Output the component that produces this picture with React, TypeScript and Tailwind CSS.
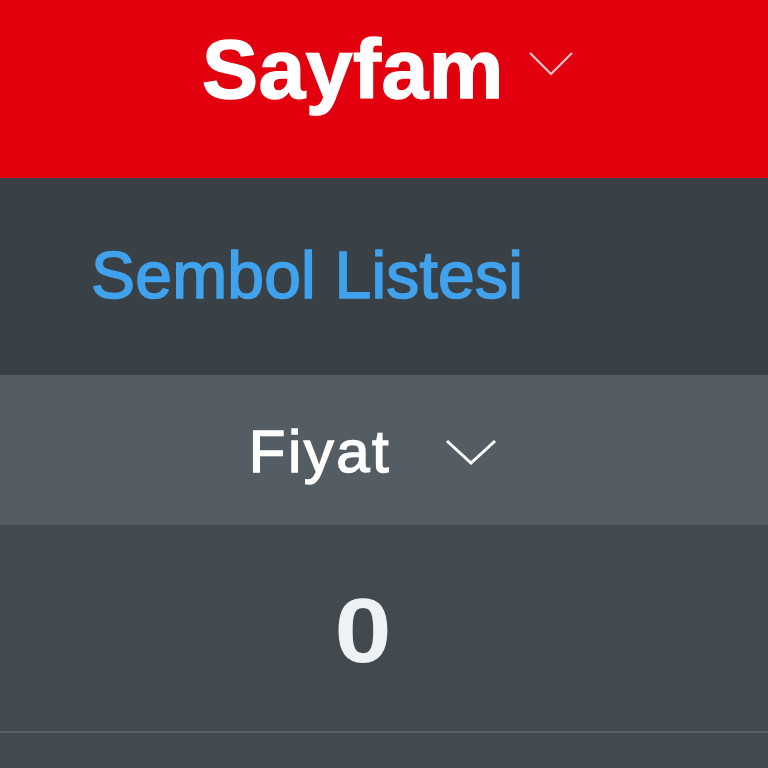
export default function App() {
    return (
        <div className="w-[768px] h-[768px] overflow-hidden bg-[#424a50] font-['Liberation_Sans',Arial,sans-serif]">
            {/* Başlık */}
            <header className="h-[178px] bg-[#e2000f] flex items-center justify-center gap-[24px] pl-[16px]">
                <span className="text-[84px] font-bold text-white leading-none -mt-[40px] tracking-[0.5px] -translate-x-[4px] [-webkit-text-stroke:1.5px_white]">Sayfam</span>
                <svg width="46" height="26" viewBox="0 0 46 26" className="-mt-[50px] -translate-x-[4px]" fill="none">
                    <path d="M2 2 L23 23 L44 2" stroke="#f6c7c9" strokeWidth="2.2" />
                </svg>
            </header>

            <div className="h-[197px] bg-[#394147] flex items-center pl-[91px]">
                <span className="text-[66px] text-[#40a2ec] leading-none tracking-[0.2px] -mt-[4px] [-webkit-text-stroke:1.6px_#40a2ec]">Sembol Listesi</span>
            </div>

            <div className="h-[150px] bg-[#535d63] flex items-center justify-center gap-[54px] pr-[22px]">
                <span className="text-[60px] text-white leading-none tracking-[2.5px] mt-[4px] [-webkit-text-stroke:1.4px_white]">Fiyat</span>
                <svg width="52" height="28" viewBox="0 0 52 28" fill="none" className="mt-[4px]">
                    <path d="M2 3 L26 25 L50 3" stroke="white" strokeWidth="3" />
                </svg>
            </div>

            <div className="h-[208px] bg-[#424a50] flex items-center justify-center pr-[42px] border-b-2 border-[#586168]">
                <span className="text-[90px] font-bold text-[#eef2f5] leading-none mt-[6px] inline-block scale-x-[1.14]">0</span>
            </div>
        </div>
    );
}
